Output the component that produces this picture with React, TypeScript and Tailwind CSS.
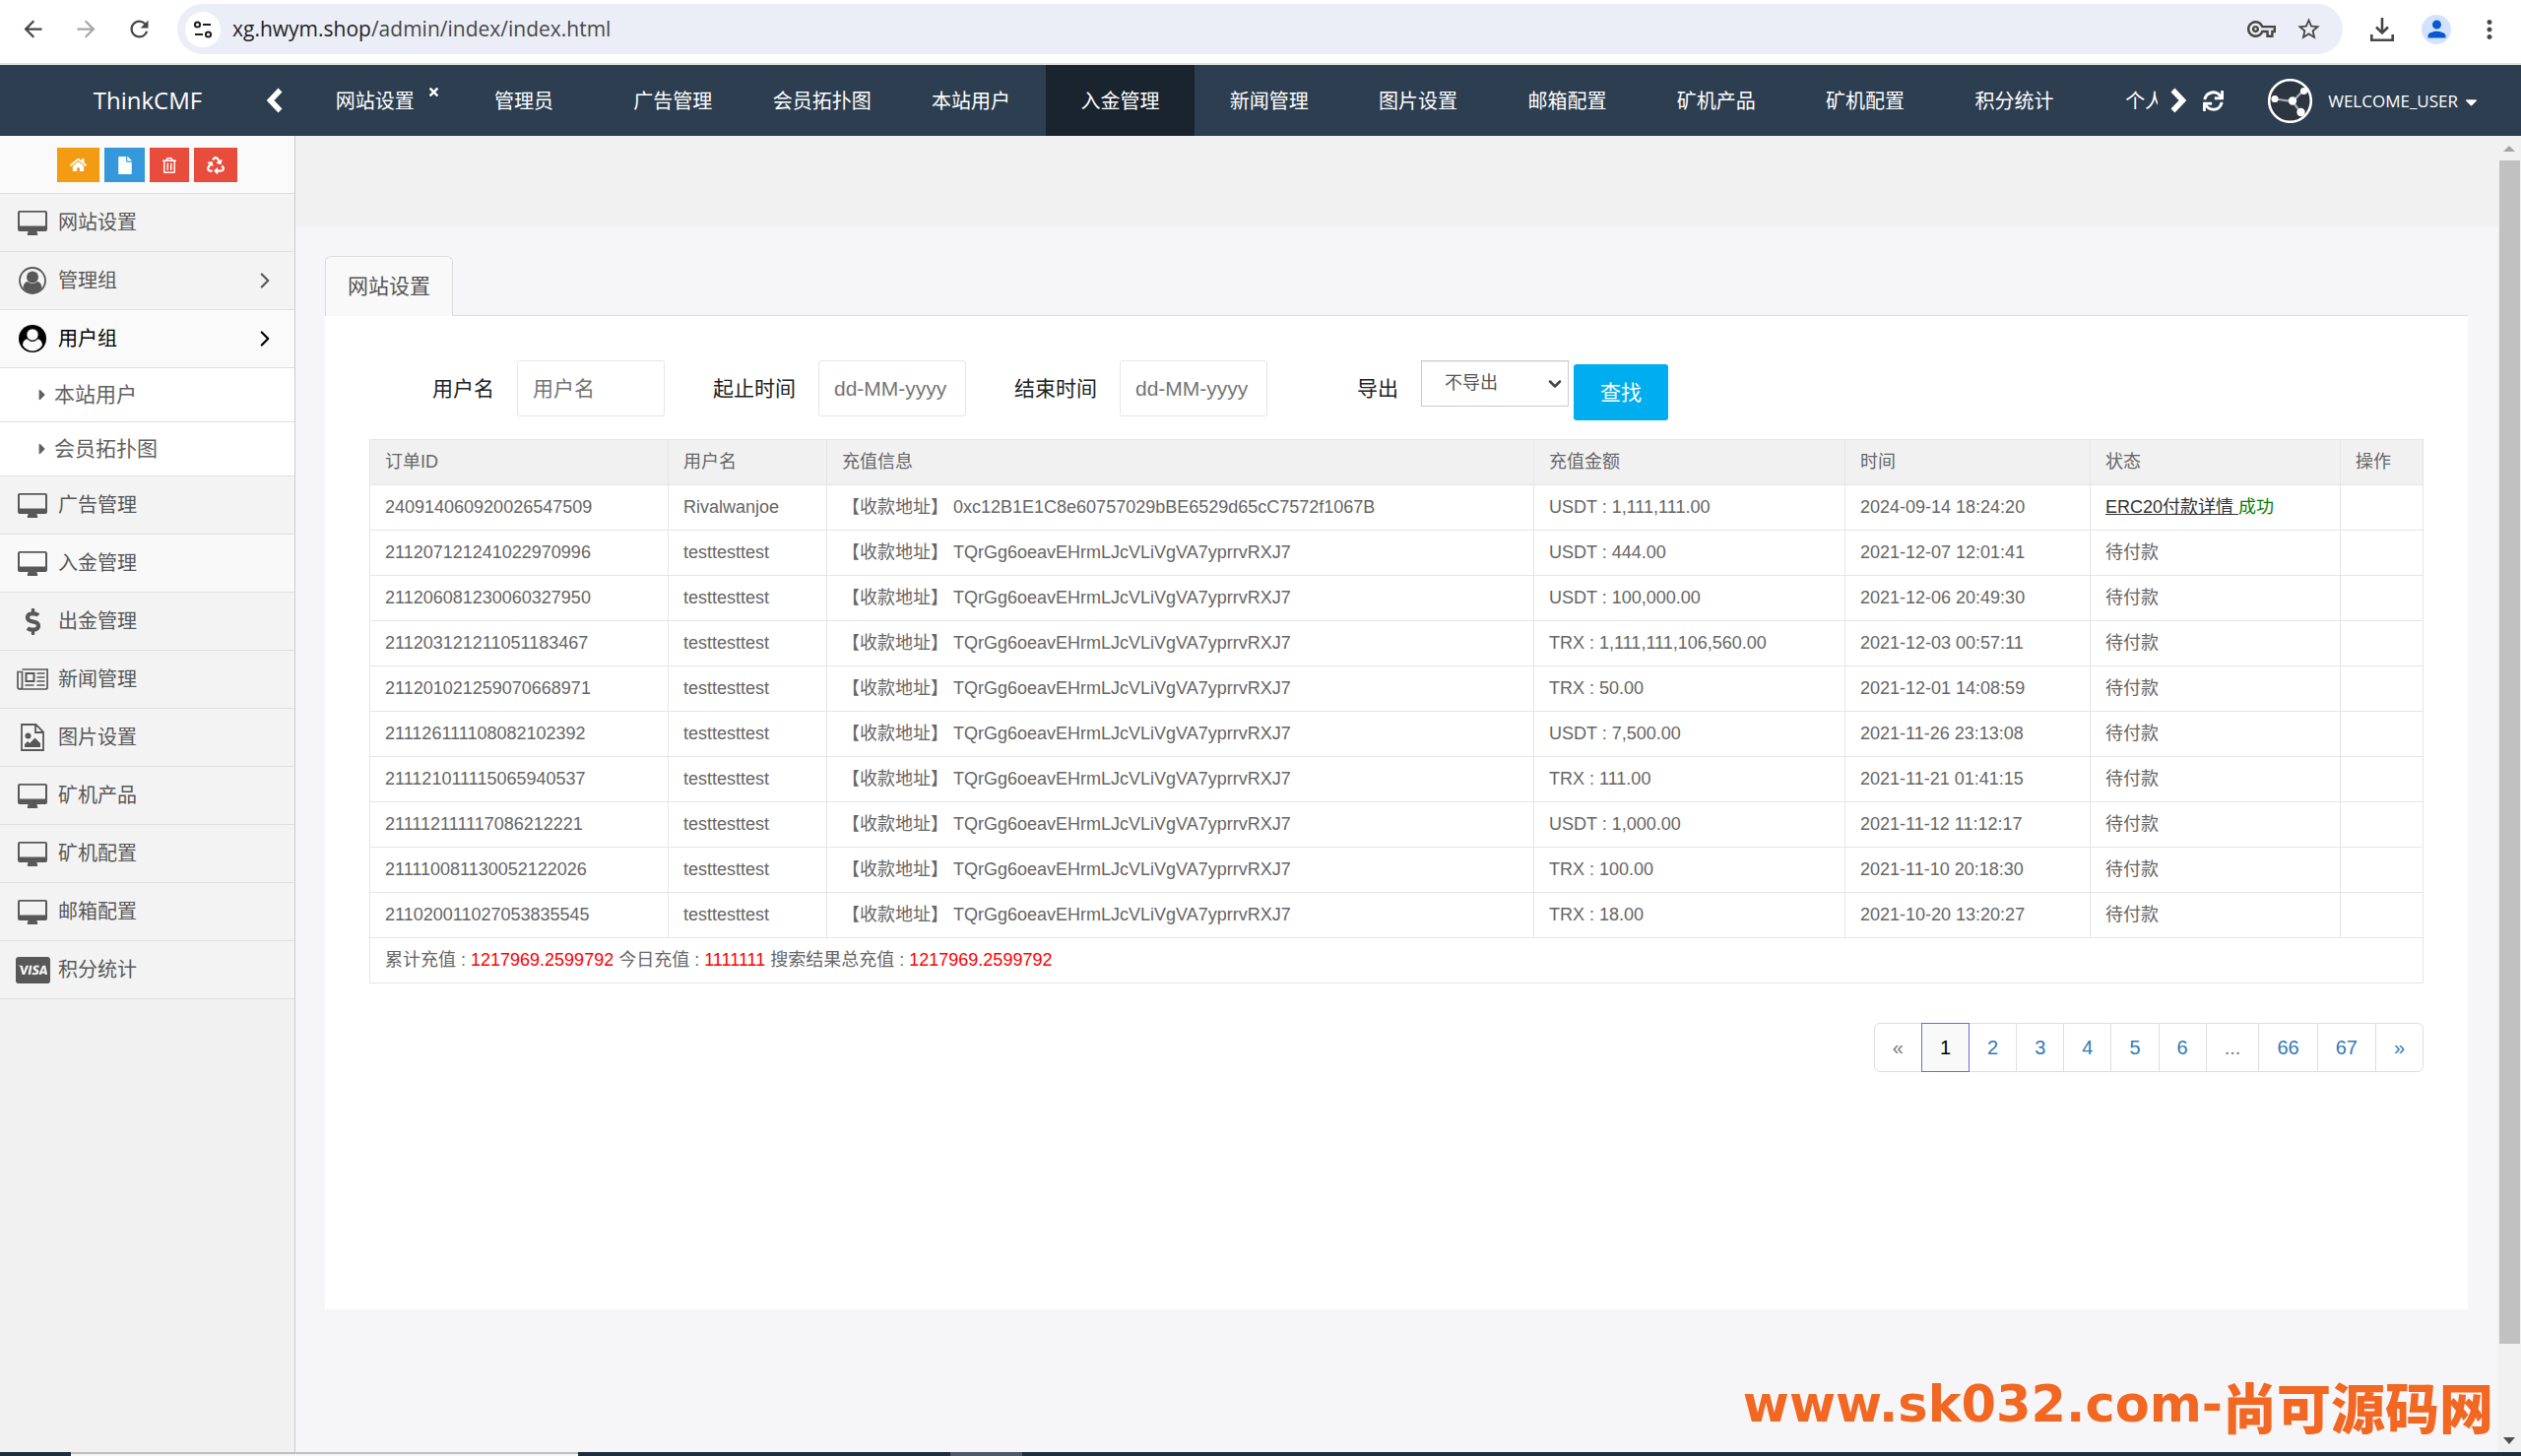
import React, { useState } from 'react';
import { ChevronDown, ChevronRight } from 'lucide-react';
import {
  FaCaretDown,
  FaCaretRight,
  FaCcVisa,
  FaDollarSign,
  FaFile,
  FaHome,
  FaRecycle,
  FaRegTrashAlt,
  FaSync,
  FaTimes,
} from 'react-icons/fa';
import {
  MdArrowBack,
  MdArrowForward,
  MdMoreVert,
  MdOutlineVpnKey,
  MdPerson,
  MdRefresh,
  MdStarBorder,
} from 'react-icons/md';

type Order = {
  id: string;
  user: string;
  address: string;
  amount: string;
  time: string;
  paid?: boolean;
};

const TRX_ADDRESS = 'TQrGg6oeavEHrmLJcVLiVgVA7yprrvRXJ7';

const ORDERS: Order[] = [
  {
    id: '240914060920026547509',
    user: 'Rivalwanjoe',
    address: '0xc12B1E1C8e60757029bBE6529d65cC7572f1067B',
    amount: 'USDT : 1,111,111.00',
    time: '2024-09-14 18:24:20',
    paid: true,
  },
  { id: '211207121241022970996', user: 'testtesttest', address: TRX_ADDRESS, amount: 'USDT : 444.00', time: '2021-12-07 12:01:41' },
  { id: '211206081230060327950', user: 'testtesttest', address: TRX_ADDRESS, amount: 'USDT : 100,000.00', time: '2021-12-06 20:49:30' },
  { id: '211203121211051183467', user: 'testtesttest', address: TRX_ADDRESS, amount: 'TRX : 1,111,111,106,560.00', time: '2021-12-03 00:57:11' },
  { id: '211201021259070668971', user: 'testtesttest', address: TRX_ADDRESS, amount: 'TRX : 50.00', time: '2021-12-01 14:08:59' },
  { id: '211126111108082102392', user: 'testtesttest', address: TRX_ADDRESS, amount: 'USDT : 7,500.00', time: '2021-11-26 23:13:08' },
  { id: '211121011115065940537', user: 'testtesttest', address: TRX_ADDRESS, amount: 'TRX : 111.00', time: '2021-11-21 01:41:15' },
  { id: '211112111117086212221', user: 'testtesttest', address: TRX_ADDRESS, amount: 'USDT : 1,000.00', time: '2021-11-12 11:12:17' },
  { id: '211110081130052122026', user: 'testtesttest', address: TRX_ADDRESS, amount: 'TRX : 100.00', time: '2021-11-10 20:18:30' },
  { id: '211020011027053835545', user: 'testtesttest', address: TRX_ADDRESS, amount: 'TRX : 18.00', time: '2021-10-20 13:20:27' },
];

const TABS = [
  '网站设置',
  '管理员',
  '广告管理',
  '会员拓扑图',
  '本站用户',
  '入金管理',
  '新闻管理',
  '图片设置',
  '邮箱配置',
  '矿机产品',
  '矿机配置',
  '积分统计',
];

const PAGES = ['«', '1', '2', '3', '4', '5', '6', '...', '66', '67', '»'];

function DesktopIcon() {
  return (
    <svg width="30" height="25" viewBox="0 0 30 25" fill="currentColor">
      <path
        fillRule="evenodd"
        d="M2 0h26a2 2 0 0 1 2 2v17a2 2 0 0 1-2 2h-8.500c0 1.500.8 2 .8 3.200 0 .5-.4.800-.8.800h-9c-.4 0-.8-.3-.8-.8 0-1.200.8-1.700.8-3.200H2a2 2 0 0 1-2-2V2a2 2 0 0 1 2-2zm0 1.700v13.800h26V1.700z"
      />
    </svg>
  );
}

function UserRingIcon() {
  return (
    <svg width="28" height="28" viewBox="0 0 28 28">
      <circle cx="14" cy="14" r="13" fill="none" stroke="currentColor" strokeWidth="1.800" />
      <circle cx="14" cy="10.500" r="6" fill="currentColor" />
      <path d="M4.500 21.500c0-3.500 2-6.500 4.800-6.500 1.200 1.200 2.800 2 4.700 2s3.500-.8 4.700-2c2.800 0 4.800 3 4.800 6.500C21.500 25 18 27 14 27s-7.500-2-9.500-5.500z" fill="currentColor" />
    </svg>
  );
}

function UserSolidIcon() {
  return (
    <svg width="28" height="28" viewBox="0 0 28 28">
      <circle cx="14" cy="14" r="14" fill="currentColor" />
      <path d="M4 20.500c.3-3.500 2-6 4.800-6 1.400 1.500 3.200 2.500 5.200 2.500s3.800-1 5.200-2.500c2.800 0 4.500 2.500 4.800 6-2 3.500-5.700 6-10 6s-8-2.500-10-6z" fill="#fafafa" />
      <circle cx="14" cy="10" r="6.200" fill="#fafafa" stroke="currentColor" strokeWidth="1" />
    </svg>
  );
}

function NewspaperIcon() {
  return (
    <svg width="32" height="22" viewBox="0 0 32 22" fill="none" stroke="currentColor" strokeWidth="1.700">
      <path d="M5.500 1h25.600v18a2 2 0 0 1-2 2H3.200A2.300 2.300 0 0 1 1 18.700V3.500h4.500v15.200A2.300 2.300 0 0 1 3.200 21" />
      <path d="M9.500 5h8v8h-8z" strokeWidth="2" />
      <path d="M20.500 5h8M20.500 9h8M20.500 13h8M8.500 17h9M20.500 17h8" />
    </svg>
  );
}

function ImageFileIcon() {
  return (
    <svg width="24" height="28" viewBox="0 0 24 28">
      <path d="M1 1h14.500L23 8.500V27H1zM15 1v8h8" fill="none" stroke="currentColor" strokeWidth="1.800" />
      <circle cx="7.500" cy="12.500" r="3" fill="currentColor" />
      <path d="M4 24v-3l3-3 2.200 2 5.300-5.500 5.500 5.500v4z" fill="currentColor" />
    </svg>
  );
}

function AvatarIcon() {
  return (
    <svg width="45" height="45" viewBox="0 0 45 45">
      <circle cx="22.500" cy="22.500" r="21.300" fill="#2c3540" stroke="#fff" strokeWidth="2.600" />
      <path d="M7 20.500 25 23 36 12M25 23l8.500 11.500" fill="none" stroke="#a9afb5" strokeWidth="2.200" />
      <g fill="#fff">
        <circle cx="7" cy="20.500" r="3.600" />
        <circle cx="25" cy="22.500" r="4.200" />
        <circle cx="36.500" cy="12.500" r="3.600" />
        <circle cx="33.500" cy="34" r="4.200" />
      </g>
    </svg>
  );
}

function ScrollLeftIcon() {
  return (
    <svg width="17" height="26" viewBox="0 0 17 26" fill="none" stroke="currentColor" strokeWidth="5.500">
      <path d="M14.500 2.500 4.500 13l10 10.500" />
    </svg>
  );
}

function ScrollRightIcon() {
  return (
    <svg width="17" height="26" viewBox="0 0 17 26" fill="none" stroke="currentColor" strokeWidth="5.500">
      <path d="M2.500 2.500 12.500 13l-10 10.500" />
    </svg>
  );
}

function SiteInfoIcon() {
  return (
    <svg width="20" height="20" viewBox="0 0 20 20" fill="none" stroke="#1f1f1f" strokeWidth="2">
      <circle cx="4.500" cy="5" r="2.600" />
      <path d="M10 5h8M2 15h8" />
      <circle cx="15.500" cy="15" r="2.600" />
    </svg>
  );
}

function DownloadIcon() {
  return (
    <svg width="24" height="24" viewBox="0 0 24 24" fill="none" stroke="#474747" strokeWidth="2.600">
      <path d="M12 0v15M6 9.500l6 6 6-6M1.300 17v5.700h21.400V17" />
    </svg>
  );
}

function BrowserBar() {
  return (
    <div className="flex h-[66px] shrink-0 items-start border-b-2 border-[#dfe3e1] bg-white pt-1 pl-[20px] text-[#474747]">
      <div className="flex h-[51px] items-center">
        <button aria-label="Back" className="w-[54px]">
          <MdArrowBack size={27} />
        </button>
        <button aria-label="Forward" className="w-[54px] text-[#a8a8a8]">
          <MdArrowForward size={27} />
        </button>
        <button aria-label="Reload" className="w-[52px]">
          <MdRefresh size={27} />
        </button>
      </div>
      <div className="flex h-[51px] flex-1 items-center rounded-full bg-[#ebeef7] pr-[21px] pl-2">
        <button aria-label="Site information" className="flex size-[36px] items-center justify-center rounded-full bg-white">
          <SiteInfoIcon />
        </button>
        <span className="ml-3 flex-1 pb-px font-['Open_Sans','Noto_Sans',sans-serif] text-[21px] leading-[28px]">
          <span className="text-[#1f1f1f]">xg.hwym.shop</span>/admin/index/index.html
        </span>
        <button aria-label="Passwords">
          <MdOutlineVpnKey size={29} />
        </button>
        <button aria-label="Bookmark" className="ml-5">
          <MdStarBorder size={27} />
        </button>
      </div>
      <div className="flex h-[51px] items-center pl-[28px]">
        <button aria-label="Downloads">
          <DownloadIcon />
        </button>
        <button aria-label="Profile" className="ml-7 flex size-[30px] items-center justify-center rounded-full bg-[#d3e3fd] text-[#0b57d0]">
          <MdPerson size={27} />
        </button>
        <button aria-label="Menu" className="mr-[17px] ml-[24px]">
          <MdMoreVert size={30} />
        </button>
      </div>
    </div>
  );
}

function TopNav({ active, onSelect }: { active: string; onSelect: (tab: string) => void }) {
  return (
    <nav className="flex h-[72px] shrink-0 items-center bg-[#2c3e50] font-['Open_Sans','Noto_Sans_CJK_SC',sans-serif] text-[20px] leading-[28px] text-white">
      <a href="#" className="w-[270px] pl-[30px] text-center text-[24px]">
        ThinkCMF
      </a>
      <button aria-label="Scroll left" className="flex w-[35px] shrink-0">
        <ScrollLeftIcon />
      </button>
      <div className="flex h-full min-w-0 flex-1">
        {TABS.map((tab, i) => (
          <button
            key={tab}
            onClick={() => onSelect(tab)}
            className={
              tab === active
                ? 'relative flex-1 bg-[#1a242f] pt-[2px] whitespace-nowrap'
                : 'relative flex-1 pt-[2px] whitespace-nowrap'
            }
          >
            {tab}
            {i === 0 && <FaTimes size={13} className="absolute top-[21px] right-[9px]" />}
          </button>
        ))}
        <button className="w-[70px] shrink-0 overflow-hidden pt-[2px] pl-[37px] text-left whitespace-nowrap">个人</button>
      </div>
      <button aria-label="Scroll right" className="ml-[13px] flex w-[33px]">
        <ScrollRightIcon />
      </button>
      <button aria-label="Refresh" className="flex w-[66px]">
        <FaSync size={21} />
      </button>
      <AvatarIcon />
      <button className="mr-[41px] ml-[16px] flex items-center gap-1 pt-[2px] text-[17px]">
        WELCOME_USER
        <FaCaretDown size={19} />
      </button>
    </nav>
  );
}

function MenuItem({ icon, label, arrow, tone }: { icon: React.ReactNode; label: string; arrow?: boolean; tone?: 'open' | 'current' }) {
  const colors =
    tone === 'open' ? 'bg-[#fafafa] text-black' : tone === 'current' ? 'bg-[#f9f9f9] text-[#585858]' : 'bg-[#f3f3f3] text-[#585858]';
  return (
    <a href="#" className={`flex h-[59px] items-center border-b border-[#e0e0e0] pl-[15px] ${colors}`}>
      <span className="flex w-[36px] justify-center">{icon}</span>
      <span className="flex-1 pl-2">{label}</span>
      {arrow && <ChevronRight size={26} strokeWidth={2} className="mr-[17px]" />}
    </a>
  );
}

function SubItem({ label }: { label: string }) {
  return (
    <a href="#" className="flex h-[55px] items-center border-b border-[#e0e0e0] bg-white pl-[39px] text-[21px] text-[#616161]">
      <FaCaretRight size={18} className="w-[8px]" />
      <span className="pb-[2px] pl-2">{label}</span>
    </a>
  );
}

function Sidebar() {
  return (
    <aside className="w-[300px] shrink-0 border-r border-[#ccc] bg-[#f1f1f1] font-['Open_Sans','Noto_Sans_CJK_SC',sans-serif] text-[20px] leading-[28px]">
      <div className="flex h-[59px] items-start justify-center gap-[5px] border-b border-[#ddd] bg-[#fafafa] pt-3 text-white">
        <button aria-label="Home" className="flex h-[35px] w-[43px] items-center justify-center bg-[#f39c12]">
          <FaHome size={17} />
        </button>
        <button aria-label="Pages" className="flex h-[35px] w-[41px] items-center justify-center bg-[#3498db]">
          <FaFile size={18} />
        </button>
        <button aria-label="Delete" className="flex h-[35px] w-[40px] items-center justify-center bg-[#e74c3c]">
          <FaRegTrashAlt size={16} />
        </button>
        <button aria-label="Recycle" className="flex h-[35px] w-[44px] items-center justify-center bg-[#e74c3c]">
          <FaRecycle size={18} />
        </button>
      </div>
      <MenuItem icon={<DesktopIcon />} label="网站设置" />
      <MenuItem icon={<UserRingIcon />} label="管理组" arrow />
      <MenuItem icon={<UserSolidIcon />} label="用户组" arrow tone="open" />
      <SubItem label="本站用户" />
      <SubItem label="会员拓扑图" />
      <MenuItem icon={<DesktopIcon />} label="广告管理" />
      <MenuItem icon={<DesktopIcon />} label="入金管理" tone="current" />
      <MenuItem icon={<FaDollarSign size={27} />} label="出金管理" />
      <MenuItem icon={<NewspaperIcon />} label="新闻管理" />
      <MenuItem icon={<ImageFileIcon />} label="图片设置" />
      <MenuItem icon={<DesktopIcon />} label="矿机产品" />
      <MenuItem icon={<DesktopIcon />} label="矿机配置" />
      <MenuItem icon={<DesktopIcon />} label="邮箱配置" />
      <MenuItem icon={<FaCcVisa size={35} />} label="积分统计" />
    </aside>
  );
}

function TextField({ id, label, placeholder }: { id: string; label: string; placeholder: string }) {
  return (
    <div className="flex items-center">
      <label htmlFor={id} className="mr-[23px] w-[84px] text-right">
        {label}
      </label>
      <input
        id={id}
        type="text"
        placeholder={placeholder}
        className="h-[57px] w-[150px] rounded-[3px] border border-[#e6e6e6] bg-white px-[15px] text-[21px] text-[#555] placeholder:text-[#757575]"
      />
    </div>
  );
}

function SearchForm() {
  return (
    <form className="flex items-start gap-[49px] pl-[43px] text-[21px] leading-[28px] text-[#222]" onSubmit={(e) => e.preventDefault()}>
      <TextField id="username" label="用户名" placeholder="用户名" />
      <TextField id="start" label="起止时间" placeholder="dd-MM-yyyy" />
      <TextField id="end" label="结束时间" placeholder="dd-MM-yyyy" />
      <div className="flex items-start">
        <label htmlFor="export" className="mr-[23px] w-[84px] text-right leading-[57px]">
          导出
        </label>
        <div className="relative">
          <select
            id="export"
            className="h-[47px] w-[150px] appearance-none border border-[#ccc] bg-white pb-[2px] pl-[23px] text-[18px] text-[#555] shadow-[inset_0_1px_1px_rgba(0,0,0,0.075)]"
          >
            <option>不导出</option>
            <option>导出</option>
          </select>
          <ChevronDown size={20} strokeWidth={3} className="pointer-events-none absolute top-[14px] right-[4px] text-[#444]" />
        </div>
        <button type="submit" className="mt-1 ml-[5px] h-[57px] w-[96px] rounded-[3px] bg-[#00aeef] text-white">
          查找
        </button>
      </div>
    </form>
  );
}

function OrderTable() {
  return (
    <table className="w-full table-fixed border-collapse text-left text-[18px] leading-[25px] text-[#666] [&_td]:border [&_td]:border-[#e6e6e6] [&_td]:px-[15px] [&_td]:py-[10px] [&_th]:border [&_th]:border-[#e6e6e6] [&_th]:px-[15px] [&_th]:py-[10px] [&_th]:font-normal">
      <thead className="bg-[#f1f1f1]">
        <tr>
          <th className="w-[303px]">订单ID</th>
          <th className="w-[161px]">用户名</th>
          <th>充值信息</th>
          <th className="w-[316px]">充值金额</th>
          <th className="w-[249px]">时间</th>
          <th className="w-[254px]">状态</th>
          <th className="w-[84px]">操作</th>
        </tr>
      </thead>
      <tbody>
        {ORDERS.map((order) => (
          <tr key={order.id}>
            <td>{order.id}</td>
            <td>{order.user}</td>
            <td>【收款地址】 {order.address}</td>
            <td>{order.amount}</td>
            <td>{order.time}</td>
            <td>
              {order.paid ? (
                <>
                  <a href="#" className="text-[#333] underline">
                    ERC20付款详情{' '}
                  </a>
                  <span className="text-[#008000]">成功</span>
                </>
              ) : (
                '待付款'
              )}
            </td>
            <td></td>
          </tr>
        ))}
      </tbody>
      <tfoot>
        <tr>
          <td colSpan={7}>
            累计充值 : <span className="text-[#f00]">1217969.2599792</span> 今日充值 : <span className="text-[#f00]">1111111</span>{' '}
            搜索结果总充值 : <span className="text-[#f00]">1217969.2599792</span>
          </td>
        </tr>
      </tfoot>
    </table>
  );
}

function Pagination() {
  const [page, setPage] = useState('1');
  return (
    <ul className="mt-10 flex justify-end text-[20px] leading-[48px]">
      {PAGES.map((label) => {
        const muted = label === '«' || label === '...';
        return (
          <li key={label} className="group -ml-px">
            {muted ? (
              <span className="block border border-[#ddd] px-[18px] text-[#777] group-first:rounded-l-[6px]">{label}</span>
            ) : (
              <a
                href="#"
                onClick={() => setPage(label)}
                className={
                  label === page
                    ? 'relative block border border-[#6a6ae0] bg-[#f9f9f9] px-[18px] text-black'
                    : 'block border border-[#ddd] px-[18px] text-[#337ab7] group-last:rounded-r-[6px]'
                }
              >
                {label}
              </a>
            )}
          </li>
        );
      })}
    </ul>
  );
}

export default function App() {
  const [tab, setTab] = useState('入金管理');

  return (
    <div className="flex h-screen flex-col overflow-hidden bg-white">
      <BrowserBar />
      <TopNav active={tab} onSelect={setTab} />

      <div className="flex min-h-0 flex-1">
        <Sidebar />

        <main className="relative flex min-w-0 flex-1 flex-col bg-[#f6f6f9] font-['Liberation_Sans','Noto_Sans_CJK_SC',sans-serif]">
          <div className="h-[92px] shrink-0 bg-[#f1f1f1]" />
          <div className="flex flex-1 flex-col px-[30px] pt-[30px] pb-[145px]">
            <div className="flex border-b border-[#ddd]">
              <a
                href="#"
                className="-mb-px h-[61px] rounded-t-[6px] border border-b-0 border-[#ddd] bg-[#f9f9f9] px-[22px] text-[21px] leading-[60px] text-[#555]"
              >
                网站设置
              </a>
            </div>
            <div className="flex-1 bg-white px-[45px] pt-[45px]">
              <SearchForm />
              <div className="mt-[19px]">
                <OrderTable />
              </div>
              <Pagination />
            </div>
          </div>

          {/* Site watermark */}
          <div className="absolute right-[4px] bottom-[16px] flex items-center font-bold whitespace-nowrap text-[#f26722]">
            <span className="font-['DejaVu_Sans',sans-serif] text-[51px] leading-[64px]">www.sk032.com-</span>
            <span className="font-['Noto_Sans_CJK_SC',sans-serif] text-[55px] leading-[64px] font-black">尚可源码网</span>
          </div>
        </main>

        {/* Scrollbar */}
        <div className="flex w-6 shrink-0 flex-col items-center bg-[#f1f1f1]">
          <svg width="12" height="25" viewBox="0 0 12 25" fill="#a3a3a3">
            <path d="M0 16 6 10l6 6z" />
          </svg>
          <div className="w-[21px] flex-1 bg-[#c1c1c1]" />
          <div className="flex h-[110px] items-end pb-2">
            <svg width="12" height="7" viewBox="0 0 12 7" fill="#505050">
              <path d="M0 0h12L6 7z" />
            </svg>
          </div>
        </div>
      </div>

      {/* Desktop edge below the window */}
      <div className="flex h-1 shrink-0 bg-[#1f2e3a]">
        <div className="ml-[72px] w-[515px] border-t-2 border-[#bfbfbf] bg-[#f5f5f5]" />
        <div className="ml-[378px] w-[73px] bg-[#505a66]" />
      </div>
    </div>
  );
}
